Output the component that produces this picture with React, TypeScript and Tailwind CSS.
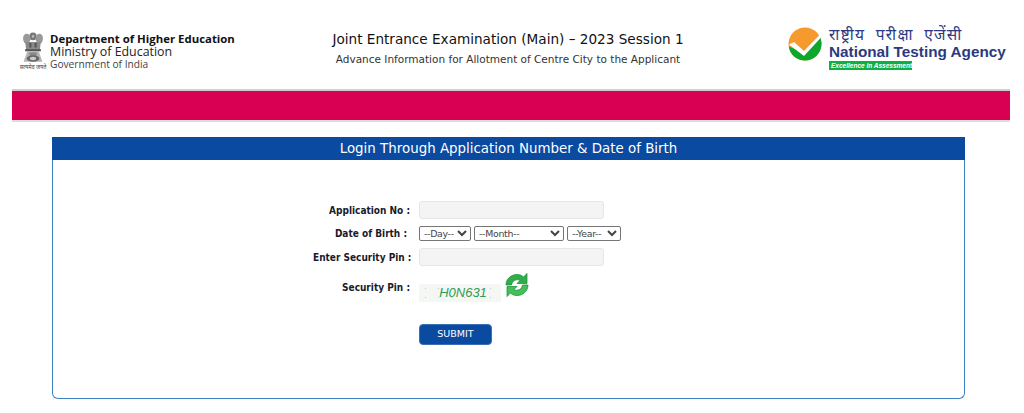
function Emblem() {
  return (
    <div className="flex w-[28px] flex-col items-center">
      <svg width="22" height="32" viewBox="0 0 21 29" preserveAspectRatio="none">
        <ellipse cx="10.500" cy="4" rx="3.500" ry="3.500" fill="#777" />
        <ellipse cx="4.500" cy="6" rx="3.500" ry="4.500" fill="#999" />
        <ellipse cx="16.500" cy="6" rx="3.500" ry="4.500" fill="#999" />
        <circle cx="10.500" cy="4" r="1.200" fill="#bbb" />
        <path d="M3 9h15l-1 7H4z" fill="#8a8a8a" />
        <path d="M7 10h2v4H7zM12 10h2v4h-2z" fill="#555" />
        <rect x="3" y="15.500" width="15" height="2" fill="#555" />
        <path d="M5 17.500h11l1 3 2.500 6.500H1.500L4 20.500z" fill="#b5b5b5" />
        <path d="M7 18.500h7v3H7z" fill="#888" />
        <ellipse cx="10.500" cy="24" rx="6" ry="3" fill="#666" />
        <ellipse cx="10.500" cy="24" rx="3" ry="1.500" fill="#ccc" />
      </svg>
      <span className="mt-[1px] font-['Noto_Sans',sans-serif] text-[5.5px] leading-[4px] whitespace-nowrap text-[#444]">सत्यमेव जयते</span>
    </div>
  );
}

function NtaLogo() {
  return (
    <svg width="34" height="34" viewBox="0 0 34 34">
      <circle cx="17" cy="17" r="16.500" fill="#f79a2e" />
      <path d="M0.800 19.500C2 28 9 33.500 17 33.500 26 33.500 33.500 26 33.500 17c0-3-.7-5.800-2-8L16 26z" fill="#0ba82d" />
      <path d="M1 17.500l5-2.500 10 9 15.500-16 1.500 2.500L16 29z" fill="#fff" />
    </svg>
  );
}

function RefreshIcon() {
  const arrow =
    "M1 12C1 6 6 1.500 12 1.500c3 0 5 1 6.500 2.500L22 .5V10.500H12l3-3c-1-.7-2-.7-3-.7-3 0-5 2-5.500 5.200z";
  return (
    <svg width="24" height="24" viewBox="0 0 24 24">
      <path d={arrow} fill="#2fae49" stroke="#128a30" strokeWidth="0.7" />
      <path d={arrow} fill="#44bf5c" stroke="#128a30" strokeWidth="0.7" transform="rotate(180 12 12)" />
    </svg>
  );
}

function DateSelect({ label, width }: { label: string; width: string }) {
  return (
    <select
      defaultValue=""
      className={`h-[15px] rounded-[2px] border border-[#767676] bg-white text-[9.4px] tracking-[-0.3px] text-[#444] ${width}`}
    >
      <option value="">{label}</option>
    </select>
  );
}

function Label({ text, className = "" }: { text: string; className?: string }) {
  return (
    <div
      className={`w-[97px] text-right font-['DejaVu_Sans_Condensed','DejaVu_Sans',sans-serif] text-[10px] font-bold whitespace-nowrap text-[#1a1a2a] ${className}`}
    >
      {text}
    </div>
  );
}

export default function App() {
  return (
    <div className="h-[413px] w-[1024px] overflow-hidden bg-white font-['DejaVu_Sans',Verdana,sans-serif]">
      <header className="flex h-[89px] items-start">
        <div className="mt-[32px] ml-[19px] flex w-[300px] items-start gap-[3px]">
          <Emblem />
          <div className="font-['Open_Sans',sans-serif] leading-[13px] text-[#222]">
            <div className="text-[11.4px] font-bold whitespace-nowrap text-[#111]">Department of Higher Education</div>
            <div className="text-[12.4px] whitespace-nowrap">Ministry of Education</div>
            <div className="text-[10.2px] whitespace-nowrap text-[#444]">Government of India</div>
          </div>
        </div>
        <div className="mt-[30px] ml-[-11px] w-[400px] text-center">
          <div className="text-[13.6px] leading-[18px] whitespace-nowrap text-[#111]">Joint Entrance Examination (Main) – 2023 Session 1</div>
          <div className="mt-[4px] text-[10.5px] leading-[14px] whitespace-nowrap text-[#333]">Advance Information for Allotment of Centre City to the Applicant</div>
        </div>
        <div className="mt-[27px] ml-[80px] flex items-start gap-[7px]">
          <div>
            <NtaLogo />
          </div>
          <div className="font-['Liberation_Sans',Arial,sans-serif]">
            <div className="font-['Noto_Sans','Noto_Sans_Devanagari',sans-serif] text-[15.5px] leading-[15px] tracking-[1.3px] [word-spacing:5px] whitespace-nowrap text-[#2b3a80]">राष्ट्रीय परीक्षा एजेंसी</div>
            <div className="mt-[1px] text-[15.3px] leading-[17px] font-bold whitespace-nowrap text-[#2b3a80]">National Testing Agency</div>
            <div className="mt-[1px] flex h-[9px] w-[83px] items-center bg-[#0fb043] px-[2px] text-[6.5px] font-bold whitespace-nowrap text-white italic">Excellence in Assessment</div>
          </div>
        </div>
      </header>

      <div className="ml-[12px] h-[33px] w-[998px] border-t-2 border-b-2 border-t-[#cfcfcf] border-b-[#dcdcdc] bg-[#d90054]" />

      <main className="mx-[52px] mt-[15px] h-[262px] w-[913px] rounded-b-[6px] border-x border-b border-[#3f7fc4]">
        <div className="-mx-px flex h-[23px] items-center justify-center bg-[#0a4aa0] pt-[2px] text-[13.4px] text-white">
          Login Through Application Number &amp; Date of Birth
        </div>
        <div className="mt-[41px] ml-[260px] flex flex-col">
          <div className="flex h-[18px] items-center gap-[9px]">
            <Label text="Application No :" />
            <input type="text" className="h-[18px] w-[185px] rounded-[3px] border border-[#e6e6e6] bg-[#f4f4f4]" />
          </div>
          <div className="mt-[7px] flex h-[15px] items-center gap-[9px]">
            <Label text="Date of Birth :" className="pr-[3px]" />
            <div className="flex gap-[3px]">
              <DateSelect label="--Day--" width="w-[52px]" />
              <DateSelect label="--Month--" width="w-[90px]" />
              <DateSelect label="--Year--" width="w-[54px]" />
            </div>
          </div>
          <div className="mt-[7px] flex h-[18px] items-center gap-[9px]">
            <Label text="Enter Security Pin :" />
            <input type="text" className="h-[18px] w-[185px] rounded-[3px] border border-[#e6e6e6] bg-[#f4f4f4]" />
          </div>
          <div className="mt-[6px] flex items-start gap-[9px]">
            <div className="mt-[8px]">
              <Label text="Security Pin :" />
            </div>
            <div className="mt-[12px] flex h-[18px] w-[82px] items-center justify-center bg-[#f5f7f4] bg-[radial-gradient(#c4ccc4_0.5px,transparent_0.6px)] bg-[length:13px_9px] pl-[6px] font-['Liberation_Sans',sans-serif] text-[13px] text-[#2f9c55] italic">
              H0N631
            </div>
            <div className="-ml-[5px] pt-[1px]">
              <RefreshIcon />
            </div>
          </div>
          <div className="mt-[22px] ml-[106px]">
            <button className="flex h-[21px] w-[73px] items-center justify-center rounded-[4px] border border-[#3a70b8] bg-[#0a4aa0] text-[9.5px] font-medium text-white">
              SUBMIT
            </button>
          </div>
        </div>
      </main>
    </div>
  );
}
